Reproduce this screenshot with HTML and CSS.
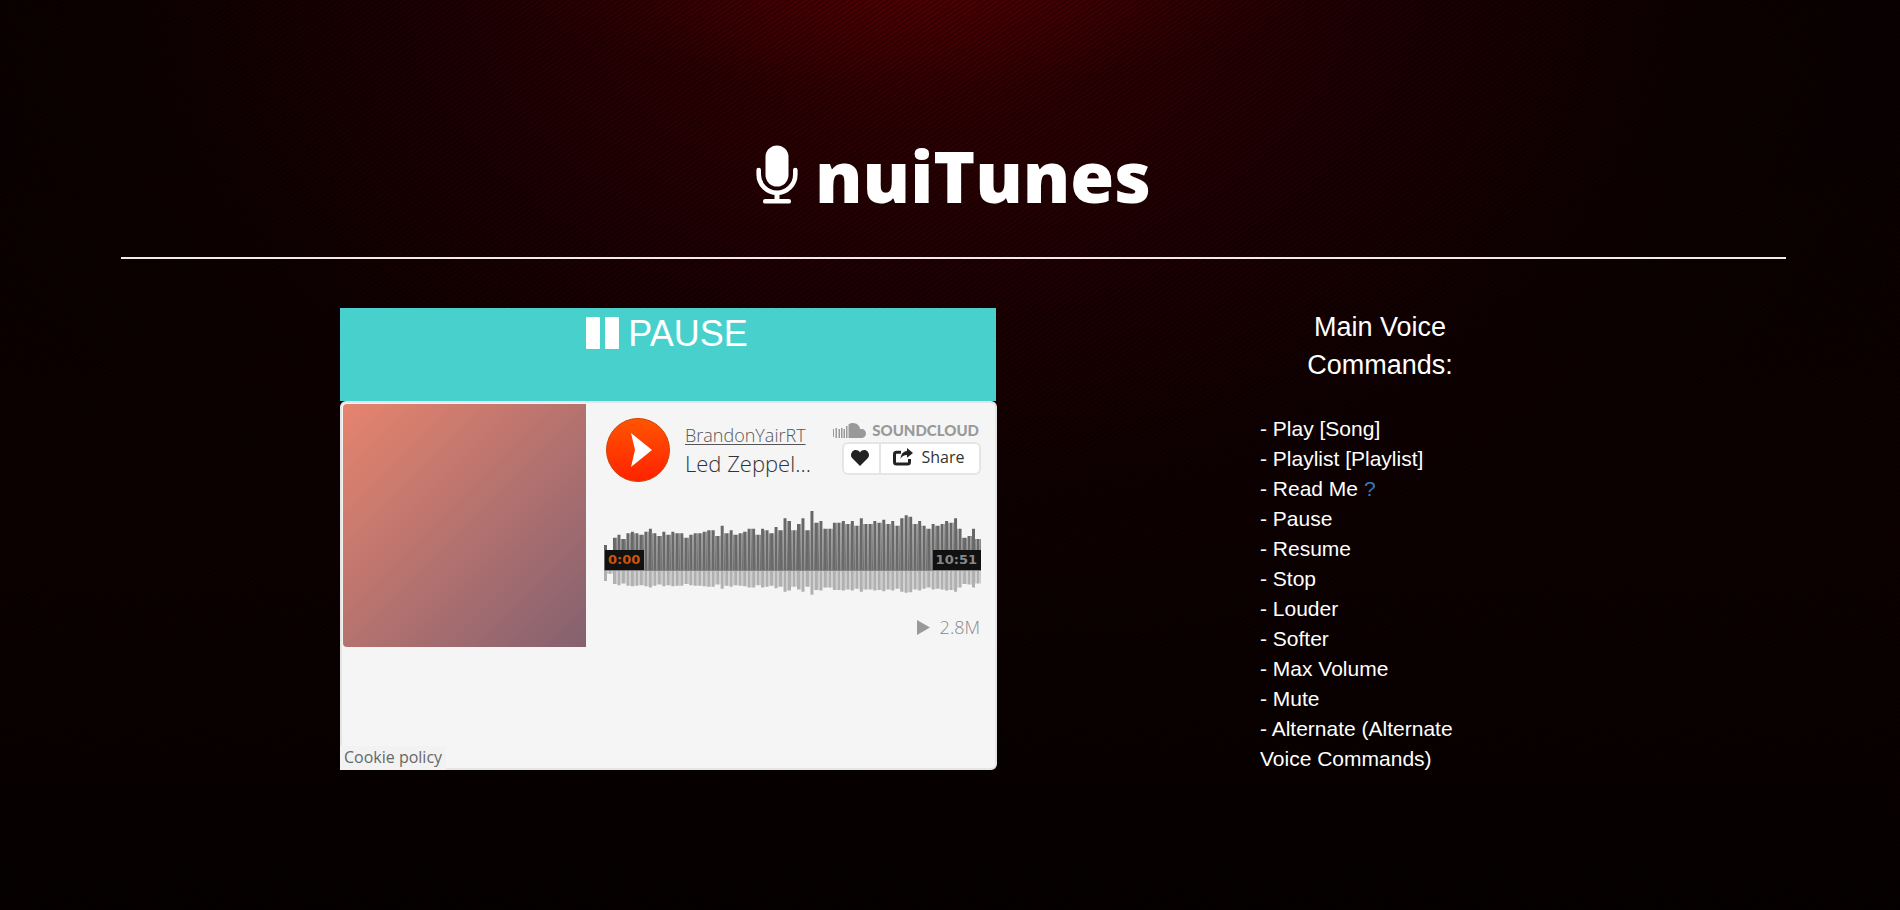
FILE: index.html
```html
<!DOCTYPE html>
<html lang="en">
<head>
<meta charset="utf-8">
<title>nuiTunes</title>
<link rel="stylesheet" href="styles.css">
</head>
<body>
<div class="page">
  <header class="masthead">
    <h1 class="logo">
      <svg class="logo-mic" viewBox="0 0 42 59" aria-hidden="true">
        <rect x="9.500" y="0.500" width="23" height="41" rx="11.500" fill="#fff"/>
        <path d="M2.700 25v4.500a18.300 18.300 0 0 0 36.600 0V25" fill="none" stroke="#fff" stroke-width="4.600" stroke-linecap="round"/>
        <path d="M18.500 48h5v6h-5z" fill="#fff"/>
        <rect x="7" y="54" width="28" height="4.600" rx="2.200" fill="#fff"/>
      </svg>
      <span>nuiTunes</span>
    </h1>
  </header>
  <main class="content">
    <section class="deck">
      <button class="pause" type="button">
        <svg class="pause-icon" viewBox="0 0 33 32" aria-hidden="true"><rect width="14" height="32" rx="1"/><rect x="19" width="14" height="32" rx="1"/></svg>
        <span>PAUSE</span>
      </button>
      <article class="player">
        <div class="artwork"></div>
        <div class="sound">
          <div class="sound-head">
            <button class="play" type="button" aria-label="Play">
              <svg viewBox="0 0 64 64" aria-hidden="true">
                <defs><linearGradient id="orange" x2="0" y2="1"><stop offset="0" stop-color="#f50"/><stop offset="1" stop-color="#f20"/></linearGradient></defs>
                <circle cx="32" cy="32" r="31.500" fill="url(#orange)" stroke="#cc4400"/>
                <path d="M25 15l21 17-21 17 4-17z" fill="#fff"/>
              </svg>
            </button>
            <div class="titles">
              <a class="artist" href="#">BrandonYairRT</a>
              <a class="track" href="#">Led Zeppel...</a>
            </div>
            <div class="side">
              <a class="brand" href="#">
                <svg viewBox="0 0 33 15" aria-hidden="true"><path d="M0 6h1v8H0zM2.500 5H4v10H2.500zM5.500 6H7v9H5.500zM8 5h1.500v10H8zM10.500 6H12v9h-1.500zM13 3h1.500v12H13zM15.500 1.500C17 .4 18.500 0 20 0c4 0 6.800 3 7.200 6.300 3-.9 5.800 1.200 5.800 4.200 0 2.600-2 4.500-4.500 4.500h-13z"/></svg>
                <span>SOUNDCLOUD</span>
              </a>
              <div class="actions">
                <button class="like" type="button" aria-label="Like"><svg viewBox="0 0 18 16" aria-hidden="true"><path d="M9 16L1.300 8.300C-.4 6.500-.4 3.500 1.200 1.700 3-.4 7-.7 9 2.500c2-3.200 6-2.900 7.800-.8 1.600 1.800 1.600 4.800-.1 6.600z"/></svg></button>
                <button class="share" type="button"><svg viewBox="0 0 20 18" aria-hidden="true"><path d="M8 4.300H3.500a2 2 0 0 0-2 2V14a2 2 0 0 0 2 2h11a2 2 0 0 0 2-2v-3" fill="none" stroke="#222" stroke-width="3"/><path d="M7.500 11C8 6 10 3.500 14 3V0l6 5-6 4.800V7c-3 0-5 1-6.500 4z"/></svg><span>Share</span></button>
              </div>
            </div>
          </div>
          <div class="wave">
            <svg id="wave" viewBox="0 0 378 84" preserveAspectRatio="none" aria-hidden="true"></svg>
            <span class="time elapsed">0:00</span>
            <span class="time total">10:51</span>
          </div>
          <div class="plays">
            <svg viewBox="0 0 13 15" aria-hidden="true"><path d="M0 0l13 7.500L0 15z"/></svg>
            <span>2.8M</span>
          </div>
        </div>
        <a class="cookie" href="#">Cookie policy</a>
      </article>
    </section>
    <aside class="commands">
      <h2>Main Voice Commands:</h2>
      <ul>
        <li>- Play [Song]</li>
        <li>- Playlist [Playlist]</li>
        <li>- Read Me <a href="#">?</a></li>
        <li>- Pause</li>
        <li>- Resume</li>
        <li>- Stop</li>
        <li>- Louder</li>
        <li>- Softer</li>
        <li>- Max Volume</li>
        <li>- Mute</li>
        <li>- Alternate (Alternate Voice Commands)</li>
      </ul>
    </aside>
  </main>
</div>
<script src="wave.js"></script>
</body>
</html>
```
FILE: styles.css
```css
* { box-sizing: border-box; }
body {
  margin: 0;
  min-height: 100vh;
  color: #fff;
  font-family: "Liberation Sans", Arial, sans-serif;
  background:
    repeating-linear-gradient(146deg, rgba(0,0,0,.3) 0 1px, rgba(90,0,0,.04) 2px 4px),
    radial-gradient(ellipse 420px 120px at 48% -30px, rgba(120,0,8,.35) 0%, rgba(100,0,4,0) 100%),
    radial-gradient(ellipse 1000px 700px at 48% -40px, #420003 0%, #290002 26%, #1b0002 50%, rgba(14,0,1,.5) 78%, rgba(6,0,0,0) 100%),
    linear-gradient(#080001, #0b0001 60%, #030000);
}
a { color: inherit; text-decoration: none; }
button { font: inherit; color: inherit; border: 0; padding: 0; cursor: pointer; }
.page { padding: 124px 6% 0; }
.masthead {
  margin-left: 7px;
  padding-bottom: 30px;
  border-bottom: 2px solid #f3eaea;
}
.logo {
  display: flex;
  justify-content: center;
  align-items: center;
  gap: 17px;
  margin: 0;
  font: 800 71px/103px "Open Sans", "Noto Sans", sans-serif;
}
.logo-mic { width: 42px; height: 59px; margin-bottom: 2px; }
.content {
  display: flex;
  align-items: flex-start;
  justify-content: space-between;
  padding: 49px 286px 0 226px;
}
.deck { width: 657px; }
.pause {
  display: flex;
  justify-content: center;
  align-items: flex-start;
  gap: 9px;
  width: 656px;
  height: 93px;
  padding: 5px 2px 0 0;
  background: #48d1cc;
  color: #fff;
  font-size: 36px;
  line-height: 41px;
}
.pause-icon { width: 33px; height: 32px; margin-top: 4px; fill: #fff; }
.player {
  display: grid;
  grid-template-columns: 243px 1fr;
  grid-template-rows: 1fr auto;
  min-height: 369px;
  padding: 1px 0 0 1px;
  border: 2px solid #e5e5e5;
  border-radius: 6px 6px 6px 0;
  background: #f5f5f5;
  font-family: "Open Sans", sans-serif;
}
.artwork {
  height: 243px;
  border-radius: 4px 0 0 4px;
  background: linear-gradient(135deg, #e6846e, #846170);
}
.sound { padding: 14px 14px 0 18px; }
.sound-head { display: flex; padding-left: 2px; }
.play { width: 64px; height: 64px; border-radius: 50%; background: none; }
.play svg { display: block; }
.titles { display: flex; flex-direction: column; margin-left: 15px; padding-top: 5px; }
.artist { color: #555; font: 300 18px/24px "Open Sans", sans-serif; text-decoration: underline; text-underline-offset: 2px; }
.track { color: #333; font: 300 22px/32px "Open Sans", sans-serif; }
.side { display: flex; flex-direction: column; align-items: flex-end; margin-left: auto; padding-top: 3px; }
.brand { display: flex; align-items: center; gap: 6px; padding-right: 2px; color: #999; font: 900 15px/18px Lato, sans-serif; }
.brand svg { width: 33px; height: 15px; fill: #999; }
.actions { display: flex; width: 139px; height: 33px; margin-top: 3px; border: 2px solid #e5e5e5; border-radius: 6px; background: #fff; }
.actions button { display: flex; align-items: center; background: none; color: #333; font: 400 16px/20px "Open Sans", sans-serif; }
.like { width: 35px; padding: 0 4px 1px 0; justify-content: center; }
.like svg { width: 18px; height: 16px; fill: #222; }
.actions .share { flex: 1; justify-content: center; gap: 9px; padding: 0 3px 3px 0; border-left: 2px solid #e5e5e5; }
.share svg { width: 20px; height: 18px; fill: #222; }
.wave { position: relative; margin-top: 29px; }
.wave svg { display: block; width: 100%; height: 84px; }
.time { position: absolute; top: 39px; height: 20px; padding: 0 4px 0 3px; background: #111; font: 700 13px/20px "DejaVu Sans", sans-serif; }
.elapsed { left: 1px; color: #c9560f; }
.total { right: 0; color: #888; }
.plays { display: flex; justify-content: flex-end; align-items: center; gap: 10px; margin-top: 19px; padding-right: 1px; color: #888; font: 300 18px/26px "Open Sans", sans-serif; }
.plays svg { width: 13px; height: 15px; fill: #999; }
.cookie {
  grid-column: 1 / -1;
  justify-self: start;
  margin: 0 0 -2px -3px;
  padding: 0 4px 1px;
  background: #f2f2f2;
  color: #666;
  font: 400 16px/23px "Open Sans", sans-serif;
}
.commands { width: 240px; }
.commands h2 { margin: 0 0 30px; font-size: 27px; font-weight: 400; line-height: 38px; text-align: center; }
.commands ul { margin: 0; padding: 0; list-style: none; font-size: 21px; line-height: 30px; }
.commands a { color: #337ab7; }
```
FILE: wave.js
```js
// Peak heights of the track, in thirds of a pixel above the centre line.
const peaks = [75,20,97,106,93,110,115,110,106,115,124,110,102,115,106,115,110,110,97,106,110,110,115,119,119,102,133,110,119,106,110,115,124,124,106,124,119,110,129,119,155,147,119,138,155,119,178,142,147,124,124,142,142,147,138,147,133,155,138,138,147,142,151,138,147,133,155,164,160,138,147,133,124,138,133,138,147,142,155,124,97,102,124,93];
const base = 59;
const step = 4.5;
const parts = { bar: '', gap: '', low: '', lowgap: '' };
peaks.forEach((p, i) => {
  const x = i * step;
  const h = p / 3;
  const g = Math.min(p, peaks[i + 1] || p) / 3;
  parts.bar += `M${x} ${base}v${-h}h3v${h}z`;
  parts.gap += `M${x + 3} ${base}v${-g}h1.5v${g}z`;
  parts.low += `M${x} ${base + 1}v${h * 0.4}h3v${-h * 0.4}z`;
  parts.lowgap += `M${x + 3} ${base + 1}v${g * 0.4}h1.5v${-g * 0.4}z`;
});
document.getElementById('wave').innerHTML = `
<defs>
<linearGradient id="g1" gradientUnits="userSpaceOnUse" x1="0" y1="0" x2="0" y2="59"><stop offset="0" stop-color="#666"/><stop offset="1" stop-color="#6a6a6a"/></linearGradient>
<linearGradient id="g2" gradientUnits="userSpaceOnUse" x1="0" y1="0" x2="0" y2="59"><stop offset="0.2" stop-color="#a0a0a0"/><stop offset="1" stop-color="#6c6c6c"/></linearGradient>
</defs>
<path d="${parts.bar}" fill="url(#g1)"/><path d="${parts.gap}" fill="url(#g2)"/>
<path d="${parts.low}" fill="#b0b0b0"/><path d="${parts.lowgap}" fill="#ccc"/>
<path d="M0 59h378v1H0z" fill="#888"/>`;
```
